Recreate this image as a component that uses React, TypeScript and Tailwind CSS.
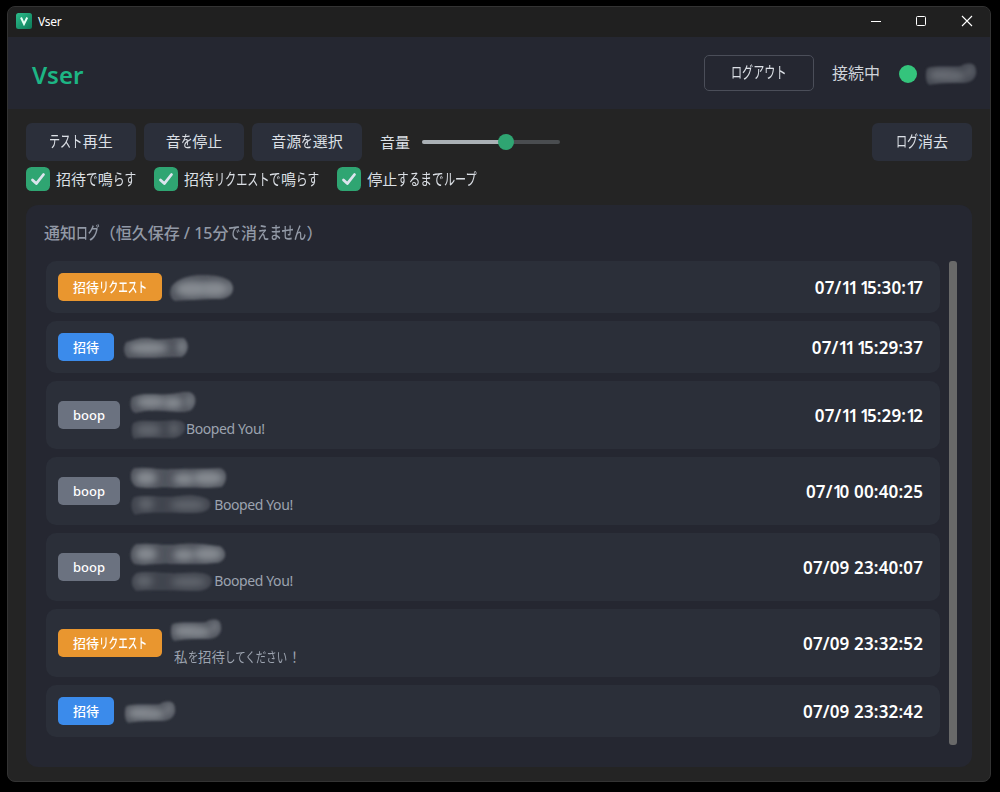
import { Fragment, useId, useState } from 'react';
import type { ReactNode } from 'react';

type Kind = 'invite' | 'request' | 'boop';

interface Spot {
  x: number;
  y: number;
  rx: number;
  ry: number;
}

interface Mask {
  width: number;
  height: number;
  d: string;
  spots: Spot[];
}

interface LogEntry {
  id: number;
  kind: Kind;
  name: Mask;
  prefix?: Mask;
  message?: string;
  time: string;
}

const BADGES: Record<Kind, { label: string; className: string }> = {
  invite: { label: '招待', className: 'w-14 bg-[#3b8beb]' },
  request: { label: '招待リクエスト', className: 'w-26 bg-[#e9962f]' },
  boop: { label: 'boop', className: 'w-15.5 bg-[#6b7280]' },
};

const userMask: Mask = {
  width: 52,
  height: 22,
  d: 'M2 5C10 2 26 4 36 3C39 0 50 -2 51 6C53 14 47 20 39 20C28 20 16 20 5 22C0 22 0 9 2 5Z',
  spots: [{ x: 16, y: 12, rx: 13, ry: 6 }, { x: 31, y: 13, rx: 10, ry: 5 }, { x: 45, y: 8, rx: 3, ry: 6 }],
};

const LOGS: LogEntry[] = [
  {
    id: 1,
    kind: 'request',
    time: '07/11 15:30:17',
    name: {
      width: 64,
      height: 28,
      d: 'M1 13C7 4 22 0 36 1C49 1 62 4 63 13C64 21 57 26 46 25C33 26 17 26 5 27C0 26 -1 18 1 13Z',
      spots: [{ x: 22, y: 15, rx: 17, ry: 8 }, { x: 45, y: 15, rx: 14, ry: 8 }, { x: 61, y: 14, rx: 2, ry: 7 }],
    },
  },
  {
    id: 2,
    kind: 'invite',
    time: '07/11 15:29:37',
    name: {
      width: 64,
      height: 22,
      d: 'M2 5C12 2 20 -1 30 2C40 3 51 0 60 1C66 6 65 16 58 20C42 21 18 21 4 21C-1 18 -1 9 2 5Z',
      spots: [{ x: 24, y: 11, rx: 20, ry: 6 }, { x: 58, y: 10, rx: 4, ry: 7 }],
    },
  },
  {
    id: 3,
    kind: 'boop',
    time: '07/11 15:29:12',
    name: {
      width: 66,
      height: 22,
      d: 'M2 6C12 1 24 4 38 3C47 3 51 0 60 1C68 4 67 15 60 20C48 23 34 19 22 20C14 19 7 24 3 21C-1 16 0 9 2 6Z',
      spots: [{ x: 21, y: 11, rx: 15, ry: 6 }, { x: 43, y: 12, rx: 10, ry: 6 }, { x: 60, y: 10, rx: 3, ry: 7 }],
    },
    prefix: {
      width: 55,
      height: 20,
      d: 'M2 4C9 0 18 2 27 2C37 2 47 -1 53 4C57 10 52 17 44 19C31 20 16 17 3 20C0 17 0 8 2 4Z',
      spots: [{ x: 17, y: 11, rx: 13, ry: 6 }, { x: 43, y: 10, rx: 5, ry: 6 }],
    },
    message: 'Booped You!',
  },
  {
    id: 4,
    kind: 'boop',
    time: '07/10 00:40:25',
    name: {
      width: 98,
      height: 22,
      d: 'M4 1C16 -1 27 3 43 2C56 1 74 2 90 1C98 3 98 14 92 20C76 22 62 20 46 21C31 19 18 23 6 20C-1 15 -1 5 4 1Z',
      spots: [{ x: 16, y: 11, rx: 11, ry: 7 }, { x: 54, y: 12, rx: 11, ry: 6 }, { x: 78, y: 11, rx: 16, ry: 7 }],
    },
    prefix: {
      width: 80,
      height: 20,
      d: 'M3 2C16 -1 31 3 46 1C58 -1 72 0 78 5C83 12 76 18 66 18C45 19 20 16 4 20C-1 15 -1 6 3 2Z',
      spots: [{ x: 15, y: 9, rx: 8, ry: 6 }, { x: 57, y: 10, rx: 18, ry: 5 }],
    },
    message: ' Booped You!',
  },
  {
    id: 5,
    kind: 'boop',
    time: '07/09 23:40:07',
    name: {
      width: 96,
      height: 23,
      d: 'M6 1C22 -1 31 3 49 1C64 -1 78 2 90 3C98 8 97 17 88 20C72 22 55 21 40 21C26 20 14 24 4 21C-2 15 0 5 6 1Z',
      spots: [{ x: 16, y: 11, rx: 11, ry: 7 }, { x: 54, y: 12, rx: 11, ry: 6 }, { x: 78, y: 11, rx: 15, ry: 7 }],
    },
    prefix: {
      width: 80,
      height: 21,
      d: 'M5 2C20 -1 34 3 48 2C60 1 73 0 79 5C84 11 79 19 69 20C47 20 24 19 5 20C-1 15 -1 7 5 2Z',
      spots: [{ x: 13, y: 10, rx: 9, ry: 6 }, { x: 58, y: 11, rx: 18, ry: 5 }],
    },
    message: ' Booped You!',
  },
  { id: 6, kind: 'request', time: '07/09 23:32:52', name: userMask, message: '私を招待してください！' },
  { id: 7, kind: 'invite', time: '07/09 23:32:42', name: userMask },
];

const TOGGLES = ['招待で鳴らす', '招待リクエストで鳴らす', '停止するまでループ'];

// UI kana are set narrower than kanji, katakana a little more than hiragana
function Jp({ children }: { children: string }) {
  const parts = children.split(/([ぁ-ん]+|[ァ-ヶー]+)/);
  return (
    <>
      {parts.map((part, i) => {
        if (i % 2 === 0) return <Fragment key={i}>{part}</Fragment>;
        const hiragana = /[ぁ-ん]/.test(part);
        return (
          <span
            key={i}
            className="inline-block whitespace-nowrap"
            style={{ width: `${part.length * (hiragana ? 0.775 : 0.74)}em` }}
          >
            <span
              className={`inline-block origin-left ${
                hiragana ? 'scale-x-[0.775] scale-y-[1.04]' : 'scale-x-[0.74] scale-y-[1.08]'
              }`}
            >
              {part}
            </span>
          </span>
        );
      })}
    </>
  );
}

function Time({ value }: { value: string }) {
  return (
    <span className="relative top-px text-[17px] font-semibold text-white whitespace-nowrap">
      {value.split('').map((c, i) => (
        <span key={i} className={c === '1' ? '-tracking-[2.8px]' : 'tracking-[0.15px]'}>{c}</span>
      ))}
    </span>
  );
}

function MaskedName({ mask, className = '' }: { mask: Mask; className?: string }) {
  const id = useId();
  return (
    <svg
      width={mask.width}
      height={mask.height}
      viewBox={`0 0 ${mask.width} ${mask.height}`}
      className={`shrink-0 overflow-visible ${className}`}
    >
      <defs>
        <clipPath id={`${id}c`}>
          <path d={mask.d} />
        </clipPath>
        <filter id={`${id}b`} x="-150%" y="-100%" width="400%" height="300%">
          <feGaussianBlur stdDeviation="3.6" />
        </filter>
        <filter id={`${id}s`} x="-10%" y="-25%" width="120%" height="150%">
          <feGaussianBlur stdDeviation="1.3" />
        </filter>
      </defs>
      <g filter={`url(#${id}s)`}>
        <g clipPath={`url(#${id}c)`}>
          <path d={mask.d} fill="#50545d" />
          {mask.spots.map((s, i) => (
            <ellipse key={i} cx={s.x} cy={s.y} rx={s.rx} ry={s.ry} fill="#868b92" filter={`url(#${id}b)`} />
          ))}
        </g>
      </g>
    </svg>
  );
}

function ToolButton({ className, children }: { className: string; children: ReactNode }) {
  return (
    <button
      className={`h-[38px] rounded-md bg-[#2b2f3a] pb-0.5 text-[15px] text-[#dce0e6] whitespace-nowrap ${className}`}
    >
      {children}
    </button>
  );
}

function TitleBar() {
  return (
    <div className="flex h-[30px] items-center bg-[#202020] pl-2 pr-[17px] text-white">
      <svg width="16" height="16" viewBox="0 0 16 16" className="mr-1.5 mb-0.5">
        <defs>
          <linearGradient id="logo" x1="0" y1="0" x2="1" y2="1">
            <stop offset="0" stopColor="#2dbd8b" />
            <stop offset="1" stopColor="#0b7a58" />
          </linearGradient>
        </defs>
        <rect width="16" height="16" rx="2.5" fill="url(#logo)" />
        <path d="M5 4.5L8 11L11.2 4.5" fill="none" stroke="#e5fff5" strokeWidth="2" />
      </svg>
      <span className="text-xs -tracking-[0.3px]">Vser</span>
      <svg width="102" height="12" viewBox="0 0 102 12" className="ml-auto mb-0.5" fill="none" stroke="#fff">
        <path d="M0 6.5H10" />
        <rect x="45.5" y="1.5" width="9" height="9" rx="1" />
        <path d="M91 1L101 11M101 1L91 11" strokeWidth="1.1" />
      </svg>
    </div>
  );
}

function LogRow({ entry }: { entry: LogEntry }) {
  const badge = BADGES[entry.kind];
  return (
    <div
      className={`flex items-center rounded-[10px] bg-[#2b2f39] pl-3 pr-[17px] ${entry.message ? 'h-17' : 'h-13'}`}
    >
      <span
        className={`flex h-7 shrink-0 items-center justify-center rounded-[5px] pt-px text-[13px] font-medium text-white whitespace-nowrap ${badge.className}`}
      >
        <span><Jp>{badge.label}</Jp></span>
      </span>
      {entry.message ? (
        <div className={`flex h-full flex-col pt-2.5 ${entry.kind === 'boop' ? 'ml-2.5' : 'ml-2'}`}>
          <MaskedName mask={entry.name} />
          <div
            className={`mt-auto mb-2 flex h-6 items-center text-[#9ca3af] whitespace-pre ${
              entry.prefix ? 'text-sm -tracking-[0.4px]' : 'pl-1 text-[13.5px]'
            }`}
          >
            {entry.prefix && <MaskedName mask={entry.prefix} className="ml-px opacity-60" />}
            <span><Jp>{entry.message}</Jp></span>
          </div>
        </div>
      ) : (
        <MaskedName mask={entry.name} className={`mt-0.5 ${entry.kind === 'request' ? 'ml-2' : 'ml-2.5'}`} />
      )}
      <div className="ml-auto">
        <Time value={entry.time} />
      </div>
    </div>
  );
}

export default function App() {
  const [checked, setChecked] = useState([true, true, true]);
  const [volume] = useState(61);

  const toggle = (index: number) => setChecked(checked.map((c, i) => (i === index ? !c : c)));

  return (
    <div className="h-[792px] w-[1000px] bg-black pt-1.5 pl-[7px] font-['Noto_Sans','Noto_Sans_CJK_JP',sans-serif]">
      <div className="flex h-[776px] w-[984px] flex-col overflow-hidden rounded-lg border border-[#333333] bg-[#242424]">
        <TitleBar />

        <header className="flex h-18 shrink-0 items-center bg-[#252731] pt-0.5 pl-6 pr-[13px]">
          <h1 className="mt-0.5 text-2xl font-semibold tracking-[0.1px] text-[#1db584]">Vser</h1>
          <button className="ml-auto mb-[3px] h-9 w-[110px] rounded-[5px] border border-[#4b4e59] text-[15px] text-[#dce0e6]">
            <Jp>ログアウト</Jp>
          </button>
          <span className="ml-[18px] mb-0.5 text-base text-[#cfd3da]">接続中</span>
          <span className="ml-[19px] h-[18px] w-[18px] rounded-full bg-[#34c47c]" />
          <MaskedName mask={userMask} className="ml-2 opacity-70" />
        </header>

        <div className="flex min-h-0 flex-1 flex-col px-[18px] pt-3.5 pb-3.5">
          <div className="flex items-center gap-2">
            <ToolButton className="w-[110px]"><Jp>テスト再生</Jp></ToolButton>
            <ToolButton className="w-[100px]"><Jp>音を停止</Jp></ToolButton>
            <ToolButton className="w-[110px]"><Jp>音源を選択</Jp></ToolButton>
            <span className="ml-2.5 text-[15px] text-[#dce0e6]">音量</span>
            <div className="relative ml-1 h-1 w-[138px] rounded-sm bg-[#4a4d50]">
              <div className="h-1 rounded-sm bg-[#aab0b5]" style={{ width: `${volume}%` }} />
              <span
                className="absolute top-1/2 h-4 w-4 -translate-x-1/2 -translate-y-1/2 rounded-full bg-[#2fa572]"
                style={{ left: `${volume}%` }}
              />
            </div>
            <ToolButton className="ml-auto w-[100px]"><Jp>ログ消去</Jp></ToolButton>
          </div>

          <div className="mt-1.5 flex h-6 items-center gap-[18px]">
            {TOGGLES.map((label, i) => (
              <button
                key={label}
                onClick={() => toggle(i)}
                className="flex items-center gap-1.5 text-[15px] text-[#dce0e6] whitespace-nowrap"
              >
                <svg width="24" height="24" viewBox="0 0 24 24">
                  <rect width="24" height="24" rx="5.5" fill={checked[i] ? '#2fa572' : '#3a3d48'} />
                  {checked[i] && (
                    <path
                      d="M6.5 13L10.3 16.6L17.5 7.5"
                      fill="none"
                      stroke="#dce4ee"
                      strokeWidth="2.8"
                      strokeLinecap="round"
                      strokeLinejoin="round"
                    />
                  )}
                </svg>
                <span><Jp>{label}</Jp></span>
              </button>
            ))}
          </div>

          <section className="mt-3.5 flex min-h-0 flex-1 flex-col rounded-xl bg-[#252731] pt-4 pr-[15px] pb-[22px] pl-5">
            <h2 className="-ml-0.5 h-6 text-base leading-6 font-medium text-[#9299a6] whitespace-nowrap">
              <Jp>通知ログ（恒久保存 / 15分で消えません）</Jp>
            </h2>
            <div className="mt-4 flex min-h-0 flex-1 gap-[9px]">
              <div className="flex flex-1 flex-col gap-2">
                {LOGS.map((entry) => (
                  <LogRow key={entry.id} entry={entry} />
                ))}
              </div>
              <div className="w-2 rounded-[3px] bg-[#696969]" />
            </div>
          </section>
        </div>
      </div>
    </div>
  );
}
